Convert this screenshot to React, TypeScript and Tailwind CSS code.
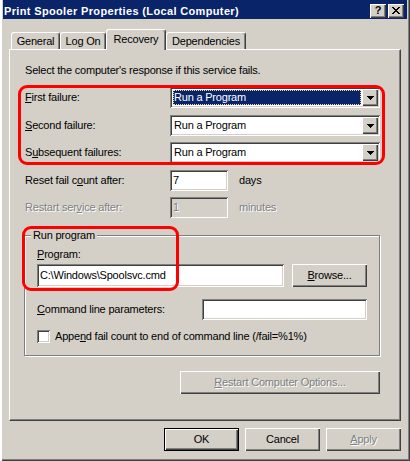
import type { ReactElement, ReactNode } from "react";

const raised = "shadow-[inset_1px_1px_#fff,inset_-1px_-1px_#404040,inset_-2px_-2px_#808080]";
const sunken =
  "shadow-[inset_1px_1px_#808080,inset_-1px_-1px_#fff,inset_2px_2px_#404040,inset_-2px_-2px_#d4d0c8]";
const disabledText = "text-[#808080] [text-shadow:1px_1px_0_#fff]";

const Arrow = (): ReactElement => (
  <svg width="7" height="4" viewBox="0 0 7 4" shapeRendering="crispEdges">
    <rect x="0" y="0" width="7" height="1" fill="#000" />
    <rect x="1" y="1" width="5" height="1" fill="#000" />
    <rect x="2" y="2" width="3" height="1" fill="#000" />
    <rect x="3" y="3" width="1" height="1" fill="#000" />
  </svg>
);

const CloseGlyph = (): ReactElement => (
  <svg width="8" height="7" viewBox="0 0 8 7" shapeRendering="crispEdges" fill="#000">
    <rect x="0" y="0" width="2" height="1" />
    <rect x="6" y="0" width="2" height="1" />
    <rect x="1" y="1" width="2" height="1" />
    <rect x="5" y="1" width="2" height="1" />
    <rect x="2" y="2" width="4" height="1" />
    <rect x="3" y="3" width="2" height="1" />
    <rect x="2" y="4" width="4" height="1" />
    <rect x="1" y="5" width="2" height="1" />
    <rect x="5" y="5" width="2" height="1" />
    <rect x="0" y="6" width="2" height="1" />
    <rect x="6" y="6" width="2" height="1" />
  </svg>
);

const Tab = ({ label, active, className }: { label: string; active?: boolean; className: string }) => (
  <div
    className={`${className} flex items-center justify-center rounded-t-[3px] border-l border-r border-t border-l-white border-r-[#404040] border-t-white bg-[#d4d0c8] shadow-[inset_-1px_0_#808080] ${
      active ? "relative z-10 -mb-px h-[21px] pb-px" : "h-[17px]"
    }`}
  >
    {label}
  </div>
);

const Combo = ({ selected }: { selected?: boolean }) => (
  <div className={`flex h-[21px] w-[210px] bg-white p-[2px] ${sunken}`}>
    <div className="flex flex-1 p-px">
      <div
        className={
          selected
            ? "flex flex-1 items-center bg-[#0a246a] pl-px text-white outline-1 outline-offset-[-1px] outline-[#f5db95] outline-dotted"
            : "flex flex-1 items-center pl-px"
        }
      >
        Run a Program
      </div>
    </div>
    <div className={`flex w-[16px] items-center justify-center bg-[#d4d0c8] ${raised}`}>
      <Arrow />
    </div>
  </div>
);

const Button = ({
  children,
  className,
  disabled,
  isDefault,
}: {
  children: ReactNode;
  className: string;
  disabled?: boolean;
  isDefault?: boolean;
}) => (
  <div
    className={`${className} flex h-[23px] items-center justify-center bg-[#d4d0c8] ${
      isDefault ? "border border-black" : ""
    } ${disabled ? disabledText : ""} ${raised}`}
  >
    {children}
  </div>
);

const FailureRow = ({ label, selected }: { label: ReactNode; selected?: boolean }) => (
  <div className="flex items-center">
    <div className="w-[145px]">{label}</div>
    <Combo selected={selected} />
  </div>
);

export default function App(): ReactElement {
  return (
    <div className="relative flex h-[461px] w-[410px] flex-col bg-[#d4d0c8] px-[3px] font-['Liberation_Sans',Arial,sans-serif] text-[11px] leading-[13px] tracking-[-0.2px] text-black shadow-[inset_2px_0_#fff,inset_-1px_-1px_#404040,inset_-2px_-2px_#808080]">
      {/* Title bar */}
      <div className="flex h-[19px] items-center justify-between bg-[#0a246a] pl-px pr-[3px] pt-[3px]">
        <span className="font-bold tracking-[0.35px] text-white">Print Spooler Properties (Local Computer)</span>
        <div className="flex gap-[2px]">
          <div className={`flex h-[14px] w-[16px] items-center justify-center bg-[#d4d0c8] pb-px text-[11px] font-bold leading-none ${raised}`}>
            ?
          </div>
          <div className={`flex h-[14px] w-[16px] items-center justify-center bg-[#d4d0c8] pb-px ${raised}`}>
            <CloseGlyph />
          </div>
        </div>
      </div>

      {/* Tabs */}
      <div className="flex h-[30px] items-end pl-[8px]">
        <Tab label="General" className="w-[49px]" />
        <Tab label="Log On" className="w-[46px]" />
        <Tab label="Recovery" className="w-[60px]" active />
        <Tab label="Dependencies" className="w-[80px]" />
      </div>

      {/* Tab page */}
      <div className="mx-[6px] flex h-[372px] flex-col border border-b-[#404040] border-l-white border-r-[#404040] border-t-white pl-[15px] pr-[20px] shadow-[inset_-1px_-1px_#808080]">
        <div className="mt-[14px]">Select the computer's response if this service fails.</div>

        <div className="mt-[10px]">
          <FailureRow
            selected
            label={
              <>
                <u>F</u>irst failure:
              </>
            }
          />
        </div>
        <div className="mt-[7px]">
          <FailureRow
            label={
              <>
                <u>S</u>econd failure:
              </>
            }
          />
        </div>
        <div className="mt-[6px]">
          <FailureRow
            label={
              <>
                S<u>u</u>bsequent failures:
              </>
            }
          />
        </div>

        <div className="mt-[7px] flex items-center">
          <div className="w-[145px]">
            Reset fail c<u>o</u>unt after:
          </div>
          <div className={`flex h-[21px] w-[58px] items-center bg-white pl-[3px] ${sunken}`}>7</div>
          <span className="ml-[11px]">days</span>
        </div>
        <div className={`mt-[6px] flex items-center`}>
          <div className={`w-[145px] ${disabledText}`}>
            Restart ser<u>v</u>ice after:
          </div>
          <div className={`flex h-[21px] w-[58px] items-center bg-[#d4d0c8] pl-[3px] ${sunken} ${disabledText}`}>1</div>
          <span className={`ml-[11px] ${disabledText}`}>minutes</span>
        </div>

        {/* Run program group */}
        <div className="-ml-px mt-[17px] flex flex-col border border-[#808080] px-[12px] pb-[12px] shadow-[1px_1px_#fff,inset_1px_1px_#fff]">
          <div className="-ml-[6px] -mt-[7px] w-fit bg-[#d4d0c8] px-[2px]">Run program</div>
          <div className="mt-[6px]">
            <u>P</u>rogram:
          </div>
          <div className="mt-[3px] flex justify-between">
            <div className={`flex h-[23px] w-[247px] items-center bg-white pl-[3px] ${sunken}`}>
              C:\Windows\Spoolsvc.cmd
            </div>
            <Button className="w-[75px]">
              <span>
                <u>B</u>rowse...
              </span>
            </Button>
          </div>
          <div className="mt-[12px] flex items-center justify-between">
            <span>
              <u>C</u>ommand line parameters:
            </span>
            <div className={`h-[21px] w-[165px] bg-white ${sunken}`} />
          </div>
          <div className="mt-[10px] flex items-center gap-[5px]">
            <div className={`h-[13px] w-[13px] bg-white ${sunken}`} />
            <span>
              Appe<u>n</u>d fail count to end of command line (/fail=%1%)
            </span>
          </div>
        </div>

        <div className="mt-[15px] flex justify-end">
          <Button className="w-[200px]" disabled>
            <span>
              <u>R</u>estart Computer Options...
            </span>
          </Button>
        </div>
      </div>

      {/* Dialog buttons */}
      <div className="mr-[6px] mt-[7px] flex justify-end gap-[6px]">
        <Button className="w-[75px]" isDefault>
          OK
        </Button>
        <Button className="w-[75px]">Cancel</Button>
        <Button className="w-[75px]" disabled>
          <span>
            <u>A</u>pply
          </span>
        </Button>
      </div>

      {/* Red highlight annotations */}
      <div className="pointer-events-none absolute left-[18px] top-[85px] h-[80px] w-[367px] rounded-[9px] border-[3px] border-[#ff0000]" />
      <div className="pointer-events-none absolute left-[22px] top-[226px] h-[65px] w-[157px] rounded-[9px] border-[3px] border-[#ff0000]" />
    </div>
  );
}
